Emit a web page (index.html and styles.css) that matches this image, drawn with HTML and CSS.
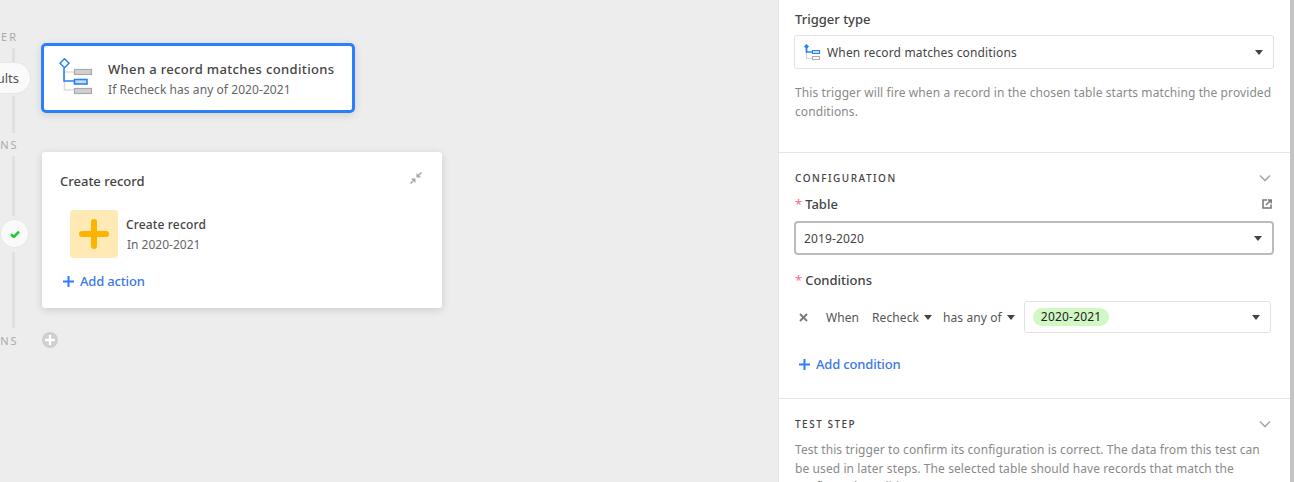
FILE: index.html
```html
<!DOCTYPE html>
<html lang="en">
<head>
<meta charset="utf-8">
<title>Automation trigger</title>
<link rel="stylesheet" href="styles.css">
</head>
<body>
<div class="app">
  <main class="canvas">
    <span class="rail-label label-trigger">TRIGGER</span>
    <span class="rail-line line-a"></span>
    <span class="pill">Results</span>
    <span class="rail-line line-b"></span>
    <span class="rail-label label-actions">ACTIONS</span>
    <span class="rail-line line-c"></span>
    <span class="status"><svg width="10" height="8" viewBox="0 0 10 8"><path d="M1 4.200 3.800 7 9 1.600" fill="none" stroke="#20c933" stroke-width="2.600"/></svg></span>
    <span class="rail-line line-d"></span>
    <span class="rail-label label-after">ACTIONS</span>
    <span class="add-step"><svg width="10" height="10" viewBox="0 0 10 10"><path d="M5 0v10M0 5h10" stroke="#fff" stroke-width="2.400"/></svg></span>

    <section class="trigger-card">
      <svg class="trigger-icon" width="36" height="38" viewBox="0 0 36 38">
        <path d="M5.500 14V32H15M5.500 14H15" fill="none" stroke="#dedede" stroke-width="1.600"/>
        <path d="M5 10V23H15" fill="none" stroke="#2d7ff9" stroke-width="1.600"/>
        <path d="M5.500 .8 10 5.300 5.500 9.800 1 5.300Z" fill="#fff" stroke="#2d7ff9" stroke-width="1.500"/>
        <rect x="15.500" y="11.500" width="17" height="5" fill="#d0d0d0" stroke="#aaa" stroke-width="1.200"/>
        <rect x="15.500" y="21.500" width="12.500" height="4.500" fill="#c4dcfd" stroke="#2d7ff9" stroke-width="1.600"/>
        <rect x="15.500" y="30.500" width="17" height="5" fill="#d0d0d0" stroke="#aaa" stroke-width="1.200"/>
      </svg>
      <div class="trigger-text">
        <div class="trigger-title">When a record matches conditions</div>
        <div class="trigger-sub">If Recheck has any of 2020-2021</div>
      </div>
    </section>

    <section class="action-card">
      <header class="action-head">
        <h2 class="action-title">Create record</h2>
        <svg class="collapse-icon" width="14" height="14" viewBox="0 0 14 14"><path d="M7.500 6.500V2L9.200 3.700 12 1l1 1-2.800 2.800L12 6.500ZM6.500 7.500V12L4.800 10.300 2 13 1 12l2.800-2.800L2 7.500Z" fill="#a6a6a6"/></svg>
      </header>
      <div class="action-row">
        <span class="action-tile"><svg width="30" height="30" viewBox="0 0 30 30"><path d="M15 3v24M3 15h24" stroke="#fcb400" stroke-width="6" stroke-linecap="round"/></svg></span>
        <div class="action-text">
          <div class="action-name">Create record</div>
          <div class="action-sub">In 2020-2021</div>
        </div>
      </div>
      <div class="link add-action"><svg class="plus" width="11" height="11" viewBox="0 0 11 11"><path d="M5.500 0v11M0 5.500h11" stroke="#2d7ff9" stroke-width="2"/></svg>Add action</div>
    </section>
  </main>

  <aside class="panel">
    <section class="block block-type">
      <div class="field-label">Trigger type</div>
      <div class="select select-type">
        <svg class="type-icon" width="17" height="16" viewBox="0 0 17 16">
          <path d="M3.500 5V14.500H9" fill="none" stroke="#d4d4d4" stroke-width="1.200"/>
          <path d="M3.500 3V8H9" fill="none" stroke="#2d7ff9" stroke-width="1.700"/>
          <path d="M3.500 0 6 2.500 3.500 5 1 2.500Z" fill="#2d7ff9"/>
          <rect x="9.500" y="6.500" width="7" height="3" fill="#c4dcfd" stroke="#2d7ff9"/>
          <rect x="9.500" y="12.500" width="7" height="3" fill="#fff" stroke="#aaa"/>
        </svg>
        <span class="select-text">When record matches conditions</span>
        <span class="caret"></span>
      </div>
      <p class="help help-type">This trigger will fire when a record in the chosen table starts matching the provided conditions.</p>
    </section>

    <section class="block block-config">
      <div class="section-head">
        <h3 class="section-title">CONFIGURATION</h3>
        <svg class="chevron" width="12" height="8" viewBox="0 0 12 8"><path d="M1 1.500 6 6.500 11 1.500" fill="none" stroke="#aaa" stroke-width="1.600"/></svg>
      </div>
      <div class="table-label-row">
        <div class="field-label"><span class="req">*</span>Table</div>
        <svg class="open-icon" width="10" height="10" viewBox="0 0 10 10"><path d="M5 1H1v8h8V5.500" fill="none" stroke="#777" stroke-width="1.500"/><path d="M4 6 8.500 1.500M5.800 1H9.200V4.400" fill="none" stroke="#777" stroke-width="1.500"/></svg>
      </div>
      <div class="select select-table">
        <span class="select-text">2019-2020</span>
        <span class="caret"></span>
      </div>
      <div class="field-label conditions-label"><span class="req">*</span>Conditions</div>
      <div class="condition-row">
        <svg class="remove" width="9" height="9" viewBox="0 0 9 9"><path d="M1 1l7 7M8 1 1 8" stroke="#777" stroke-width="1.800"/></svg>
        <span class="when">When</span>
        <span class="mini-select mini-field">Recheck<span class="caret"></span></span>
        <span class="mini-select">has any of<span class="caret"></span></span>
        <div class="select select-value">
          <span class="chip">2020-2021</span>
          <span class="caret"></span>
        </div>
      </div>
      <div class="link add-condition"><svg class="plus" width="11" height="11" viewBox="0 0 11 11"><path d="M5.500 0v11M0 5.500h11" stroke="#2d7ff9" stroke-width="2"/></svg>Add condition</div>
    </section>

    <section class="block block-test">
      <div class="section-head">
        <h3 class="section-title">TEST STEP</h3>
        <svg class="chevron" width="12" height="8" viewBox="0 0 12 8"><path d="M1 1.500 6 6.500 11 1.500" fill="none" stroke="#aaa" stroke-width="1.600"/></svg>
      </div>
      <p class="help help-test">Test this trigger to confirm its configuration is correct. The data from this test can be used in later steps. The selected table should have records that match the configured conditions.</p>
    </section>
  </aside>
  <div class="scrollbar"></div>
</div>
</body>
</html>
```
FILE: styles.css
```css
* { box-sizing: border-box; }
html, body { margin: 0; height: 100%; overflow: hidden; }
body {
  font-family: "Noto Sans", "Open Sans", sans-serif;
  font-size: 13px;
  color: #444;
  background: #ededed;
}
.app { display: flex; height: 482px; overflow: hidden; }
.canvas { position: relative; width: 778px; flex: none; }

.rail-label {
  position: absolute;
  left: -42px;
  width: 60px;
  text-align: right;
  font-size: 11px;
  letter-spacing: 2px;
  line-height: 14px;
  color: #aaa;
  white-space: nowrap;
}
.label-trigger { top: 30px; }
.label-actions { top: 138px; }
.label-after { top: 334px; }
.rail-line { position: absolute; left: 12px; width: 3px; background: #e0e0e0; }
.line-a { top: 48px; height: 14px; }
.line-b { top: 96px; height: 37px; }
.line-c { top: 156px; height: 60px; }
.line-d { top: 252px; height: 76px; }
.pill {
  position: absolute;
  left: -24px;
  top: 63px;
  height: 30px;
  width: 54px;
  padding-right: 11px;
  border-radius: 15px;
  background: #fafafa;
  box-shadow: 0 0 0 1px #e8e8e8;
  line-height: 30px;
  text-align: right;
  white-space: nowrap;
  direction: rtl;
  overflow: hidden;
  color: #555;
}
.status {
  position: absolute;
  left: 1px;
  top: 220px;
  width: 27px;
  height: 27px;
  border-radius: 50%;
  background: #fafafa;
  box-shadow: 0 0 0 1px #e8e8e8;
  display: flex;
  align-items: center;
  justify-content: center;
}
.add-step {
  position: absolute;
  left: 42px;
  top: 332px;
  width: 16px;
  height: 16px;
  border-radius: 50%;
  background: #cfcfcf;
  display: flex;
  align-items: center;
  justify-content: center;
}

.trigger-card {
  position: absolute;
  left: 41px;
  top: 43px;
  width: 314px;
  height: 70px;
  display: flex;
  align-items: center;
  padding-left: 15px;
  background: #fff;
  border: 3px solid #2d7ff9;
  border-radius: 5px;
  box-shadow: 0 2px 8px rgba(0, 0, 0, .12);
}
.trigger-icon { flex: none; margin-right: 13px; margin-top: -2px; }
.trigger-text { padding-top: 3px; }
.trigger-title { font-size: 13px; font-weight: 500; color: #444; line-height: 20px; letter-spacing: .35px; white-space: nowrap; }
.trigger-sub { font-size: 12px; color: #666; line-height: 20px; margin-top: 1px; letter-spacing: .07px; white-space: nowrap; }

.action-card {
  position: absolute;
  left: 42px;
  top: 152px;
  width: 400px;
  height: 156px;
  background: #fff;
  border-radius: 3px;
  box-shadow: 0 2px 8px rgba(0, 0, 0, .14);
  padding: 20px 18px 0;
}
.action-head { display: flex; justify-content: space-between; align-items: flex-start; }
.action-title { margin: 0; font-size: 13px; font-weight: 500; line-height: 18px; color: #444; }
.collapse-icon { margin-top: -1px; margin-right: 1px; }
.action-row { display: flex; align-items: center; margin: 20px 0 0 10px; }
.action-tile {
  width: 48px;
  height: 48px;
  border-radius: 4px;
  background: #ffeab6;
  display: flex;
  align-items: center;
  justify-content: center;
  margin-right: 8px;
}
.action-text { padding-top: 2px; }
.action-name { font-size: 12px; font-weight: 500; line-height: 20px; color: #444; letter-spacing: .15px; }
.action-sub { font-size: 12px; line-height: 20px; color: #666; padding-left: 1px; }
.link { display: flex; align-items: center; font-size: 13px; font-weight: 500; color: #3b78e7; line-height: 18px; letter-spacing: -.17px; }
.plus { margin-right: 6px; }
.add-action { margin: 14px 0 0 3px; }

.panel {
  width: 512px;
  flex: none;
  background: #fff;
  border-left: 1px solid #e4e4e4;
  height: 482px;
  overflow: hidden;
}
.scrollbar { flex: 1; background: #c4c4c4; }
.block { padding: 0 16px; border-bottom: 1px solid #e6e6e6; }
.block-type { height: 153px; padding-top: 10px; }
.block-config { height: 246px; padding-top: 15px; }
.block-test { border-bottom: 0; padding-top: 15px; }
.field-label { font-size: 13px; font-weight: 500; line-height: 18px; color: #444; }
.req { color: #f0708a; margin-right: 3px; font-weight: 400; }
.select {
  display: flex;
  align-items: center;
  background: #fff;
  border: 1px solid #e2e2e2;
  border-radius: 3px;
}
.caret {
  width: 0;
  height: 0;
  border-left: 4px solid transparent;
  border-right: 4px solid transparent;
  border-top: 5px solid #444;
  flex: none;
}
.select-type { margin: 7px 0 0 -1px; height: 34px; padding: 0 10px 0 8px; }
.type-icon { margin-right: 7px; flex: none; }
.select-text { flex: 1; font-size: 12px; color: #444; letter-spacing: .15px; }
.help { margin: 15px 0 0; font-size: 12px; line-height: 18.5px; color: #8a8a8a; width: 480px; letter-spacing: .09px; }
.help-type { margin-top: 15.4px; }
.section-head { display: flex; justify-content: space-between; align-items: center; height: 20px; }
.section-title { margin: 0; font-size: 10px; font-weight: 500; letter-spacing: 1.500px; color: #444; }
.chevron { margin-right: 3px; }
.table-label-row { display: flex; justify-content: space-between; align-items: center; margin-top: 7px; }
.open-icon { margin-right: 2px; }
.select-table { margin: 8px 0 0 -1px; height: 34px; border: 2px solid #bcbcbc; border-radius: 4px; padding: 0 10px 0 8px; }
.conditions-label { margin-top: 16px; }
.condition-row { display: flex; align-items: center; margin-top: 12px; height: 32px; padding-left: 4px; width: 476px; }
.remove { margin-right: 18px; flex: none; }
.when { font-size: 12px; color: #555; margin-right: 13px; letter-spacing: .05px; }
.mini-select { display: flex; align-items: center; gap: 5px; font-size: 12px; color: #555; margin-right: 9px; letter-spacing: .1px; }
.mini-field { margin-right: 11px; }
.select-value { flex: 1; height: 32px; padding: 0 10px 0 8px; justify-content: space-between; }
.chip {
  background: #d1f7c4;
  border-radius: 9px;
  height: 18px;
  line-height: 18px;
  padding: 0 8px;
  font-size: 12px;
  color: #222;
  letter-spacing: .2px;
}
.add-condition { margin: 22px 0 0 4px; }
.help-test { margin-top: 7px; }
```
